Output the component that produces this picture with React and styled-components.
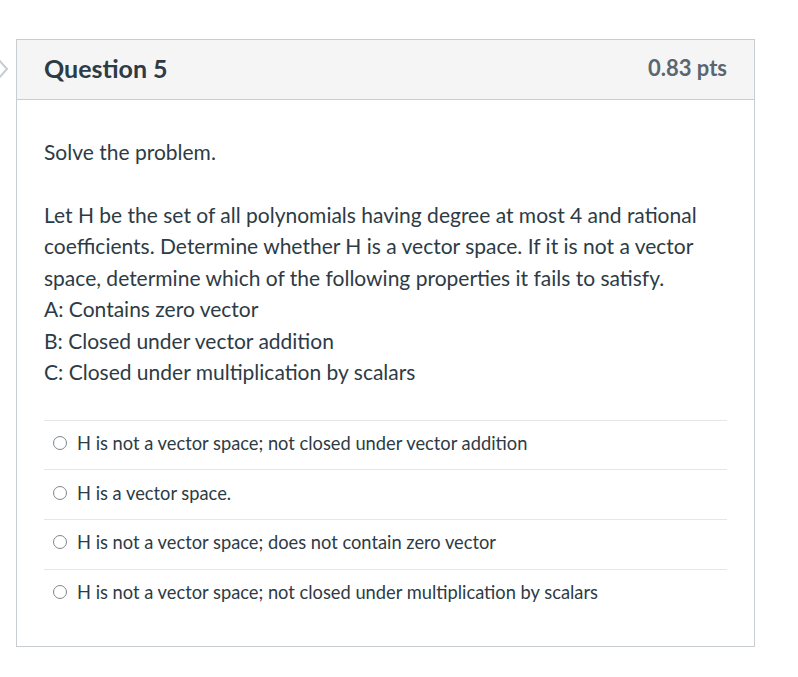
import React from 'react';
import styled, { createGlobalStyle } from 'styled-components';

const GlobalStyle = createGlobalStyle`
  body {
    margin: 0;
    background: #fff;
    font-family: Lato, "Open Sans", sans-serif;
    color: #2d3b45;
  }
`;

const Page = styled.div`
  position: relative;
  padding: 39px 43px 0 16px;
  width: 798px;
  height: 677px;
  box-sizing: border-box;
`;

const SideArrow = styled.svg`
  position: absolute;
  left: -4px;
  top: 58px;
`;

const Card = styled.div`
  border: 1px solid #c7cdd1;
  background: #fff;
`;

const Header = styled.div`
  display: flex;
  justify-content: space-between;
  align-items: center;
  height: 60px;
  padding: 0 27px 4px 27px;
  box-sizing: border-box;
  background: #f5f5f5;
  border-bottom: 1px solid #c7cdd1;
`;

const Title = styled.h2`
  margin: 0;
  font-size: 25px;
  font-weight: 700;
  color: #2d3b45;
`;

const Points = styled.span`
  font-size: 22px;
  font-weight: 700;
  color: #5b6670;
`;

const Body = styled.div`
  padding: 36px 27px 28px 27px;
`;

const Text = styled.p`
  margin: 0 0 ${(p) => p.gap || 0}px;
  font-size: 21px;
  line-height: 31.5px;
  color: #2d3b45;
`;

const Answers = styled.div`
  margin-top: 32px;
`;

const Answer = styled.label`
  display: flex;
  align-items: center;
  gap: 10px;
  height: 49.7px;
  padding: 0 0 4px 9px;
  box-sizing: border-box;
  border-top: 1px solid #e4e7e9;
  font-size: 18.3px;
  color: #2d3b45;
`;

const Radio = styled.span`
  width: 12px;
  height: 12px;
  border: 1.5px solid #7d878f;
  border-radius: 50%;
  flex-shrink: 0;
`;

const answers = [
  'H is not a vector space; not closed under vector addition',
  'H is a vector space.',
  'H is not a vector space; does not contain zero vector',
  'H is not a vector space; not closed under multiplication by scalars',
];

export default function App() {
  return (
    <>
      <GlobalStyle />
      <Page>
        <SideArrow width="14" height="22" viewBox="0 0 14 22">
          <path d="M2 1 L11 11 L2 21" fill="none" stroke="#c7cdd1" strokeWidth="2" />
        </SideArrow>
        <Card>
          <Header>
            <Title>Question 5</Title>
            <Points>0.83 pts</Points>
          </Header>
          <Body>
            <Text gap={31}>Solve the problem.</Text>
            <Text>
              Let H be the set of all polynomials having degree at most 4 and rational
              coefficients. Determine whether H is a vector space. If it is not a vector
              space, determine which of the following properties it fails to satisfy.
              <br />A: Contains zero vector
              <br />B: Closed under vector addition
              <br />C: Closed under multiplication by scalars
            </Text>
            <Answers>
              {answers.map((a) => (
                <Answer key={a}>
                  <Radio />
                  {a}
                </Answer>
              ))}
            </Answers>
          </Body>
        </Card>
      </Page>
    </>
  );
}
